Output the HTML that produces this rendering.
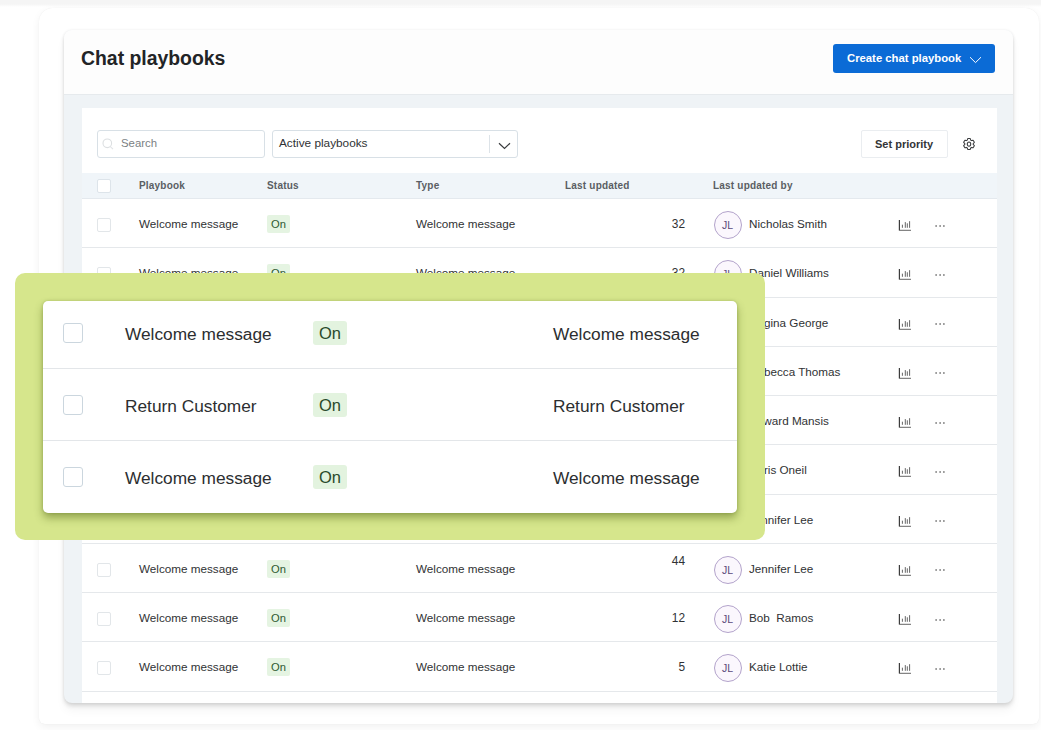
<!DOCTYPE html>
<html><head><meta charset="utf-8">
<style>
*{box-sizing:border-box;margin:0;padding:0}
html,body{width:1041px;height:730px;overflow:hidden;background:#fff;font-family:"Liberation Sans",sans-serif;color:#2f3133}
.abs{position:absolute}
#band{position:absolute;left:0;top:0;width:1041px;height:7px;background:linear-gradient(#f5f5f5 0,#f5f5f5 4px,#fff 7px)}
#outer{position:absolute;left:39px;top:8px;width:1000px;height:716px;background:#fff;border-radius:14px 14px 6px 6px;box-shadow:0 0 1px rgba(0,0,0,.08),0 3px 9px rgba(0,0,0,.06)}
#panel{position:absolute;left:64px;top:30px;width:949px;height:673px;background:#eff3f6;border-radius:8px;box-shadow:0 0 3px rgba(0,0,0,.07),0 3px 4px rgba(0,0,0,.12),0 8px 10px rgba(0,0,0,.04);overflow:hidden}
#hdr{position:absolute;left:0;top:0;width:949px;height:64.5px;background:#fdfdfd;border-bottom:1px solid #e6eaed}
#title{position:absolute;left:17px;top:17px;font-size:19.4px;font-weight:700;color:#222426;white-space:nowrap}
#create{position:absolute;left:769px;top:14px;width:162px;height:29px;background:#0b6bd6;border-radius:3px;color:#fff;font-size:11.3px;font-weight:700;white-space:nowrap}
#create span{position:absolute;left:14px;top:8px}
#create svg{position:absolute;left:136px;top:11.7px}
#card{position:absolute;left:82px;top:108px;width:915px;height:595px;background:#fff}
#search{position:absolute;left:97px;top:130px;width:168px;height:28px;border:1px solid #d8e0e6;border-radius:3px;background:#fff}
#search span{position:absolute;left:23px;top:6px;font-size:11.4px;color:#7b7f83}
#search svg{position:absolute;left:4px;top:7px}
#dd{position:absolute;left:272px;top:130px;width:246px;height:28px;border:1px solid #d8e0e6;border-radius:3px;background:#fff}
#dd span{position:absolute;left:6px;top:5px;font-size:11.8px;color:#303234;white-space:nowrap}
#dd i{position:absolute;left:216px;top:4px;width:1px;height:18px;background:#dde3e8}
#dd svg{position:absolute;left:225px;top:11px}
#setp{position:absolute;left:861px;top:130px;width:87px;height:28px;border:1px solid #eaedf0;border-radius:2px;background:#fff;font-size:11px;font-weight:700;color:#333537;white-space:nowrap}
#setp span{position:absolute;left:13px;top:7px}
#gear{position:absolute;left:962px;top:137.3px}
#thead{position:absolute;left:82px;top:173px;width:915px;height:26px;background:#f0f5f9;border-bottom:1px solid #e4e9ee}
#thead div{position:absolute;top:7px;font-size:10px;font-weight:700;letter-spacing:0.2px;color:#5a5e63;white-space:nowrap}
#thead .cbh{left:15px;top:6px;width:14px;height:14px;border:1px solid #dde4ea;border-radius:2px;background:#fff}
.row{position:absolute;left:82px;width:915px;height:49.25px;border-bottom:1px solid #e5e8eb;background:#fff}
.row>div{position:absolute;white-space:nowrap}
.row .cb{left:15px;top:19px;width:14px;height:14px;border:1px solid #e2e6e9;border-radius:2px}
.row .pb{left:57px;top:18px;font-size:11.7px;color:#303234}
.row .on{left:185px;top:16px;width:23px;height:18px;background:#e5f4e2;border-radius:2px;font-size:11.2px;color:#2f5a31;text-align:center;line-height:18px}
.row .ty{left:334px;top:18px;font-size:11.7px;color:#303234}
.row .num{left:560px;width:43px;text-align:right;top:18px;font-size:11.9px;color:#303234}
.row .num.up{top:10px}
.row .av{left:631.5px;top:12px;width:28px;height:28px;border:1px solid #b3a3cb;border-radius:50%;background:#fbf7fd;font-size:10.5px;color:#5a4a7a;text-align:center;line-height:26px}
.row .nm{left:667px;top:18px;font-size:11.7px;color:#303234}
.row .chart{position:absolute;left:816px;top:19px}
.row .dots{position:absolute;left:853px;top:24.6px}
#green{position:absolute;left:15px;top:273px;width:750px;height:267px;background:#d6e68c;border-radius:10px}
#big{position:absolute;left:43px;top:301px;width:694px;height:212px;background:#fff;border-radius:5px;box-shadow:0 5px 9px rgba(60,80,0,.42),0 0 3px rgba(60,80,0,.25);overflow:hidden}
.brow{position:absolute;left:0;width:694px;height:72px;border-bottom:1px solid #e3e6e9}
.brow>div{position:absolute;white-space:nowrap}
.brow .cb{left:20px;top:25.5px;width:20px;height:20px;border:1px solid #cbd6de;border-radius:3px}
.brow .pb{left:82px;top:26.5px;font-size:17.3px;color:#2c2e30}
.brow .on{left:270px;top:24px;width:34px;height:24px;background:#e3f3df;border-radius:3px;font-size:16.5px;color:#2b4a2c;text-align:center;line-height:24px}
.brow .ty{left:510px;top:26.5px;font-size:17.3px;color:#2c2e30}
</style></head><body>
<div id="band"></div>
<div id="outer"></div>
<div id="panel"><div id="hdr"><div id="title">Chat playbooks</div>
<div id="create"><span>Create chat playbook</span><svg width="13" height="8" viewBox="0 0 13 8"><path d="M1 1.2L6.5 6.6L12 1.2" fill="none" stroke="#fff" stroke-width="1"/></svg></div></div></div>
<div id="card"></div>
<div id="search"><svg width="14" height="14" viewBox="0 0 14 14"><circle cx="5.3" cy="5.3" r="4.3" fill="none" stroke="#dcdfe1" stroke-width="1.1"/><path d="M8.4 8.6L11 11.2" stroke="#e2e4e6" stroke-width="1.1"/></svg><span>Search</span></div>
<div id="dd"><span>Active playbooks</span><i></i><svg width="13" height="8" viewBox="0 0 13 8"><path d="M1 1.2L6.5 6.5L12 1.2" fill="none" stroke="#3a3c3e" stroke-width="1.2"/></svg></div>
<div id="setp"><span>Set priority</span></div>
<svg id="gear" width="14" height="14" viewBox="0 0 14 14"><path d="M5.29 3.16 L5.74 1.54 L8.26 1.54 L8.71 3.16 L9.47 3.60 L11.10 3.18 L12.36 5.36 L11.18 6.56 L11.18 7.44 L12.36 8.64 L11.10 10.82 L9.47 10.40 L8.71 10.84 L8.26 12.46 L5.74 12.46 L5.29 10.84 L4.53 10.40 L2.90 10.82 L1.64 8.64 L2.82 7.44 L2.82 6.56 L1.64 5.36 L2.90 3.18 L4.53 3.60Z" fill="none" stroke="#3a3c3e" stroke-width="1.05" stroke-linejoin="round"/><ellipse cx="7" cy="7.1" rx="1.75" ry="2.15" fill="none" stroke="#3a3c3e" stroke-width="1.05"/></svg>
<div id="thead"><div class="cbh"></div><div style="left:57px">Playbook</div><div style="left:185px">Status</div><div style="left:334px">Type</div><div style="left:483px">Last updated</div><div style="left:631px">Last updated by</div></div>
<div class="row" style="top:199.00px">
<div class="cb"></div><div class="pb">Welcome message</div><div class="on">On</div><div class="ty">Welcome message</div><div class="num">32</div><div class="av">JL</div><div class="nm">Nicholas Smith</div><svg class="chart" width="15" height="15" viewBox="0 0 15 15"><path d="M1.4 2V12.4" fill="none" stroke="#3c3c3c" stroke-width="1.2"/><path d="M1.4 12.3H13" fill="none" stroke="#555" stroke-width="0.9"/><path d="M4.4 6.7V9.8M7.3 4.1V9.8M9.3 5.3V9.8M11.6 3.2V9.8" fill="none" stroke="#555" stroke-width="0.9"/></svg><svg class="dots" width="12" height="4" viewBox="0 0 12 4"><circle cx="1.1" cy="2" r="0.8" fill="#3a3a3a"/><circle cx="5.1" cy="2" r="0.8" fill="#3a3a3a"/><circle cx="8.9" cy="2" r="0.8" fill="#3a3a3a"/></svg></div><div class="row" style="top:248.25px">
<div class="cb"></div><div class="pb">Welcome message</div><div class="on">On</div><div class="ty">Welcome message</div><div class="num">32</div><div class="av">JL</div><div class="nm">Daniel Williams</div><svg class="chart" width="15" height="15" viewBox="0 0 15 15"><path d="M1.4 2V12.4" fill="none" stroke="#3c3c3c" stroke-width="1.2"/><path d="M1.4 12.3H13" fill="none" stroke="#555" stroke-width="0.9"/><path d="M4.4 6.7V9.8M7.3 4.1V9.8M9.3 5.3V9.8M11.6 3.2V9.8" fill="none" stroke="#555" stroke-width="0.9"/></svg><svg class="dots" width="12" height="4" viewBox="0 0 12 4"><circle cx="1.1" cy="2" r="0.8" fill="#3a3a3a"/><circle cx="5.1" cy="2" r="0.8" fill="#3a3a3a"/><circle cx="8.9" cy="2" r="0.8" fill="#3a3a3a"/></svg></div><div class="row" style="top:297.50px">
<div class="cb"></div><div class="pb">Welcome message</div><div class="on">On</div><div class="ty">Welcome message</div><div class="num">32</div><div class="av">JL</div><div class="nm">Regina George</div><svg class="chart" width="15" height="15" viewBox="0 0 15 15"><path d="M1.4 2V12.4" fill="none" stroke="#3c3c3c" stroke-width="1.2"/><path d="M1.4 12.3H13" fill="none" stroke="#555" stroke-width="0.9"/><path d="M4.4 6.7V9.8M7.3 4.1V9.8M9.3 5.3V9.8M11.6 3.2V9.8" fill="none" stroke="#555" stroke-width="0.9"/></svg><svg class="dots" width="12" height="4" viewBox="0 0 12 4"><circle cx="1.1" cy="2" r="0.8" fill="#3a3a3a"/><circle cx="5.1" cy="2" r="0.8" fill="#3a3a3a"/><circle cx="8.9" cy="2" r="0.8" fill="#3a3a3a"/></svg></div><div class="row" style="top:346.75px">
<div class="cb"></div><div class="pb">Welcome message</div><div class="on">On</div><div class="ty">Welcome message</div><div class="num">32</div><div class="av">JL</div><div class="nm">Rebecca Thomas</div><svg class="chart" width="15" height="15" viewBox="0 0 15 15"><path d="M1.4 2V12.4" fill="none" stroke="#3c3c3c" stroke-width="1.2"/><path d="M1.4 12.3H13" fill="none" stroke="#555" stroke-width="0.9"/><path d="M4.4 6.7V9.8M7.3 4.1V9.8M9.3 5.3V9.8M11.6 3.2V9.8" fill="none" stroke="#555" stroke-width="0.9"/></svg><svg class="dots" width="12" height="4" viewBox="0 0 12 4"><circle cx="1.1" cy="2" r="0.8" fill="#3a3a3a"/><circle cx="5.1" cy="2" r="0.8" fill="#3a3a3a"/><circle cx="8.9" cy="2" r="0.8" fill="#3a3a3a"/></svg></div><div class="row" style="top:396.00px">
<div class="cb"></div><div class="pb">Welcome message</div><div class="on">On</div><div class="ty">Welcome message</div><div class="num">32</div><div class="av">JL</div><div class="nm">Edward Mansis</div><svg class="chart" width="15" height="15" viewBox="0 0 15 15"><path d="M1.4 2V12.4" fill="none" stroke="#3c3c3c" stroke-width="1.2"/><path d="M1.4 12.3H13" fill="none" stroke="#555" stroke-width="0.9"/><path d="M4.4 6.7V9.8M7.3 4.1V9.8M9.3 5.3V9.8M11.6 3.2V9.8" fill="none" stroke="#555" stroke-width="0.9"/></svg><svg class="dots" width="12" height="4" viewBox="0 0 12 4"><circle cx="1.1" cy="2" r="0.8" fill="#3a3a3a"/><circle cx="5.1" cy="2" r="0.8" fill="#3a3a3a"/><circle cx="8.9" cy="2" r="0.8" fill="#3a3a3a"/></svg></div><div class="row" style="top:445.25px">
<div class="cb"></div><div class="pb">Welcome message</div><div class="on">On</div><div class="ty">Welcome message</div><div class="num">32</div><div class="av">JL</div><div class="nm">Chris Oneil</div><svg class="chart" width="15" height="15" viewBox="0 0 15 15"><path d="M1.4 2V12.4" fill="none" stroke="#3c3c3c" stroke-width="1.2"/><path d="M1.4 12.3H13" fill="none" stroke="#555" stroke-width="0.9"/><path d="M4.4 6.7V9.8M7.3 4.1V9.8M9.3 5.3V9.8M11.6 3.2V9.8" fill="none" stroke="#555" stroke-width="0.9"/></svg><svg class="dots" width="12" height="4" viewBox="0 0 12 4"><circle cx="1.1" cy="2" r="0.8" fill="#3a3a3a"/><circle cx="5.1" cy="2" r="0.8" fill="#3a3a3a"/><circle cx="8.9" cy="2" r="0.8" fill="#3a3a3a"/></svg></div><div class="row" style="top:494.50px">
<div class="cb"></div><div class="pb">Welcome message</div><div class="on">On</div><div class="ty">Welcome message</div><div class="num">32</div><div class="av">JL</div><div class="nm">Jennifer Lee</div><svg class="chart" width="15" height="15" viewBox="0 0 15 15"><path d="M1.4 2V12.4" fill="none" stroke="#3c3c3c" stroke-width="1.2"/><path d="M1.4 12.3H13" fill="none" stroke="#555" stroke-width="0.9"/><path d="M4.4 6.7V9.8M7.3 4.1V9.8M9.3 5.3V9.8M11.6 3.2V9.8" fill="none" stroke="#555" stroke-width="0.9"/></svg><svg class="dots" width="12" height="4" viewBox="0 0 12 4"><circle cx="1.1" cy="2" r="0.8" fill="#3a3a3a"/><circle cx="5.1" cy="2" r="0.8" fill="#3a3a3a"/><circle cx="8.9" cy="2" r="0.8" fill="#3a3a3a"/></svg></div><div class="row" style="top:543.75px">
<div class="cb"></div><div class="pb">Welcome message</div><div class="on">On</div><div class="ty">Welcome message</div><div class="num up">44</div><div class="av">JL</div><div class="nm">Jennifer Lee</div><svg class="chart" width="15" height="15" viewBox="0 0 15 15"><path d="M1.4 2V12.4" fill="none" stroke="#3c3c3c" stroke-width="1.2"/><path d="M1.4 12.3H13" fill="none" stroke="#555" stroke-width="0.9"/><path d="M4.4 6.7V9.8M7.3 4.1V9.8M9.3 5.3V9.8M11.6 3.2V9.8" fill="none" stroke="#555" stroke-width="0.9"/></svg><svg class="dots" width="12" height="4" viewBox="0 0 12 4"><circle cx="1.1" cy="2" r="0.8" fill="#3a3a3a"/><circle cx="5.1" cy="2" r="0.8" fill="#3a3a3a"/><circle cx="8.9" cy="2" r="0.8" fill="#3a3a3a"/></svg></div><div class="row" style="top:593.00px">
<div class="cb"></div><div class="pb">Welcome message</div><div class="on">On</div><div class="ty">Welcome message</div><div class="num">12</div><div class="av">JL</div><div class="nm">Bob&nbsp; Ramos</div><svg class="chart" width="15" height="15" viewBox="0 0 15 15"><path d="M1.4 2V12.4" fill="none" stroke="#3c3c3c" stroke-width="1.2"/><path d="M1.4 12.3H13" fill="none" stroke="#555" stroke-width="0.9"/><path d="M4.4 6.7V9.8M7.3 4.1V9.8M9.3 5.3V9.8M11.6 3.2V9.8" fill="none" stroke="#555" stroke-width="0.9"/></svg><svg class="dots" width="12" height="4" viewBox="0 0 12 4"><circle cx="1.1" cy="2" r="0.8" fill="#3a3a3a"/><circle cx="5.1" cy="2" r="0.8" fill="#3a3a3a"/><circle cx="8.9" cy="2" r="0.8" fill="#3a3a3a"/></svg></div><div class="row" style="top:642.25px">
<div class="cb"></div><div class="pb">Welcome message</div><div class="on">On</div><div class="ty">Welcome message</div><div class="num">5</div><div class="av">JL</div><div class="nm">Katie Lottie</div><svg class="chart" width="15" height="15" viewBox="0 0 15 15"><path d="M1.4 2V12.4" fill="none" stroke="#3c3c3c" stroke-width="1.2"/><path d="M1.4 12.3H13" fill="none" stroke="#555" stroke-width="0.9"/><path d="M4.4 6.7V9.8M7.3 4.1V9.8M9.3 5.3V9.8M11.6 3.2V9.8" fill="none" stroke="#555" stroke-width="0.9"/></svg><svg class="dots" width="12" height="4" viewBox="0 0 12 4"><circle cx="1.1" cy="2" r="0.8" fill="#3a3a3a"/><circle cx="5.1" cy="2" r="0.8" fill="#3a3a3a"/><circle cx="8.9" cy="2" r="0.8" fill="#3a3a3a"/></svg></div>
<div id="green"></div>
<div id="big">
<div class="brow" style="top:-4px"><div class="cb"></div><div class="pb">Welcome message</div><div class="on">On</div><div class="ty">Welcome message</div></div>
<div class="brow" style="top:68px"><div class="cb"></div><div class="pb">Return Customer</div><div class="on">On</div><div class="ty">Return Customer</div></div>
<div class="brow" style="top:140px;border-bottom:0"><div class="cb"></div><div class="pb">Welcome message</div><div class="on">On</div><div class="ty">Welcome message</div></div>
</div>
</body></html>
